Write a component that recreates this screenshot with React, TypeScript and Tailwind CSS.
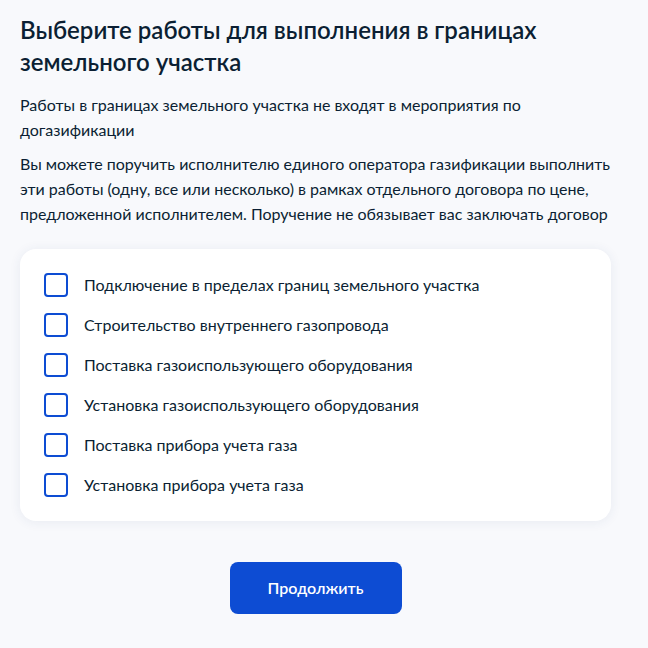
const works = [
  "Подключение в пределах границ земельного участка",
  "Строительство внутреннего газопровода",
  "Поставка газоиспользующего оборудования",
  "Установка газоиспользующего оборудования",
  "Поставка прибора учета газа",
  "Установка прибора учета газа",
];

export default function App() {
  return (
    <div className="min-h-screen bg-[#f8f9fc] px-5 pt-[14px] pb-8 text-[#0b1f33] font-['Lato',sans-serif]">
      <h1 className="text-[24px] leading-8 font-semibold mb-[14px] pr-16">
        Выберите работы для выполнения в границах земельного участка
      </h1>
      <p className="text-[16px] leading-[25px] mb-[9px] pr-10">
        Работы в границах земельного участка не входят в мероприятия по догазификации
      </p>
      <p className="text-[16px] leading-[25px] pr-4">
        Вы можете поручить исполнителю единого оператора газификации выполнить эти работы (одну, все или несколько) в рамках отдельного договора по цене, предложенной исполнителем. Поручение не обязывает вас заключать договор
      </p>

      <div className="mt-[23px] w-[591px] rounded-2xl bg-white p-6 shadow-[0_1px_12px_rgba(40,60,120,0.08)] flex flex-col gap-4">
        {works.map((w) => (
          <label key={w} className="flex items-center gap-4 h-6 cursor-pointer">
            <span className="w-6 h-6 shrink-0 rounded-[4px] border-2 border-[#0d4cd3] bg-white" />
            <span className="text-[16px] leading-6">{w}</span>
          </label>
        ))}
      </div>

      <div className="flex justify-center mt-[41px] w-[591px]">
        <button className="w-[172px] h-[52px] rounded-lg bg-[#0d4cd3] text-white text-[16px] font-semibold">
          Продолжить
        </button>
      </div>
    </div>
  );
}
